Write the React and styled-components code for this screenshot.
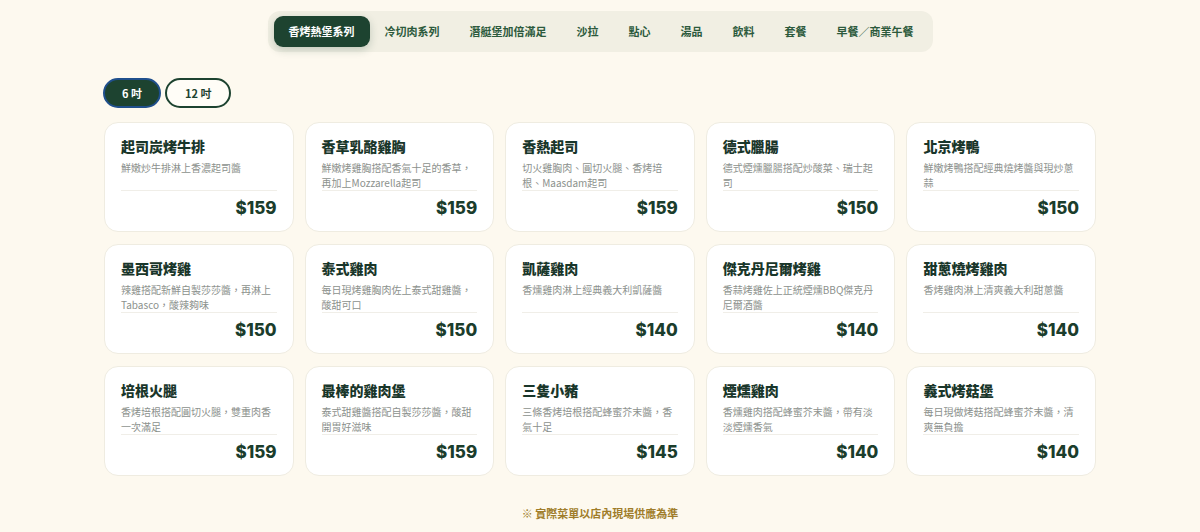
import React, { useState } from 'react'
import styled, { createGlobalStyle } from 'styled-components'

const GlobalStyle = createGlobalStyle`
  body {
    margin: 0;
    background: #fdf9ef;
    font-family: "Noto Sans CJK TC", "Noto Sans", sans-serif;
  }
`

const categories = ['香烤熱堡系列', '冷切肉系列', '潛艇堡加倍滿足', '沙拉', '點心', '湯品', '飲料', '套餐', '早餐／商業午餐']

const items = [
  { name: '起司炭烤牛排', desc: '鮮嫩炒牛排淋上香濃起司醬', price: 159 },
  { name: '香草乳酪雞胸', desc: '鮮嫩烤雞胸搭配香氣十足的香草，再加上Mozzarella起司', price: 159 },
  { name: '香熱起司', desc: '切火雞胸肉、圓切火腿、香烤培根、Maasdam起司', price: 159 },
  { name: '德式臘腸', desc: '德式煙燻臘腸搭配炒酸菜、瑞士起司', price: 150 },
  { name: '北京烤鴨', desc: '鮮嫩烤鴨搭配經典燒烤醬與現炒蔥蒜', price: 150 },
  { name: '墨西哥烤雞', desc: '辣雞搭配新鮮自製莎莎醬，再淋上Tabasco，酸辣夠味', price: 150 },
  { name: '泰式雞肉', desc: '每日現烤雞胸肉佐上泰式甜雞醬，酸甜可口', price: 150 },
  { name: '凱薩雞肉', desc: '香燻雞肉淋上經典義大利凱薩醬', price: 140 },
  { name: '傑克丹尼爾烤雞', desc: '香蒜烤雞佐上正統煙燻BBQ傑克丹尼爾酒醬', price: 140 },
  { name: '甜蔥燒烤雞肉', desc: '香烤雞肉淋上清爽義大利甜蔥醬', price: 140 },
  { name: '培根火腿', desc: '香烤培根搭配圓切火腿，雙重肉香一次滿足', price: 159 },
  { name: '最棒的雞肉堡', desc: '泰式甜雞醬搭配自製莎莎醬，酸甜開胃好滋味', price: 159 },
  { name: '三隻小豬', desc: '三條香烤培根搭配蜂蜜芥末醬，香氣十足', price: 145 },
  { name: '煙燻雞肉', desc: '香燻雞肉搭配蜂蜜芥末醬，帶有淡淡煙燻香氣', price: 140 },
  { name: '義式烤菇堡', desc: '每日現做烤菇搭配蜂蜜芥末醬，清爽無負擔', price: 140 },
]

function App() {
  const [tab, setTab] = useState(0)
  const [size, setSize] = useState('6')

  return (
    <Page>
      <GlobalStyle />
      <TabBar>
        {categories.map((c, i) => (
          <Tab key={c} active={i === tab} onClick={() => setTab(i)}>{c}</Tab>
        ))}
      </TabBar>
      <Content>
        <SizeRow>
          <SizeButton active={size === '6'} onClick={() => setSize('6')}>6 吋</SizeButton>
          <SizeButton active={size === '12'} onClick={() => setSize('12')}>12 吋</SizeButton>
        </SizeRow>
        <Grid>
          {items.map(item => (
            <Card key={item.name}>
              <Title>{item.name}</Title>
              <Desc>{item.desc}</Desc>
              <Price>${item.price}</Price>
            </Card>
          ))}
        </Grid>
        <Note>※ 實際菜單以店內現場供應為準</Note>
      </Content>
    </Page>
  )
}

export default App

const Page = styled.div`
  display: flex;
  flex-direction: column;
  align-items: center;
  padding-top: 11px;
  min-height: 532px;
  box-sizing: border-box;
`

const TabBar = styled.div`
  display: flex;
  align-items: center;
  padding: 5px 4px 5px 6px;
  background: #f1efe3;
  border-radius: 12px;
`

const Tab = styled.button`
  border: none;
  font-family: inherit;
  font-size: 11px;
  font-weight: 700;
  line-height: 15px;
  padding: 8px 15px;
  border-radius: 9px;
  cursor: pointer;
  white-space: nowrap;
  color: ${p => (p.active ? '#ffffff' : '#2c5a3c')};
  background: ${p => (p.active ? '#1d4330' : 'transparent')};
  box-shadow: ${p => (p.active ? '0 3px 8px rgba(29, 67, 48, 0.22)' : 'none')};
`

const Content = styled.div`
  width: 992px;
  display: flex;
  flex-direction: column;
`

const SizeRow = styled.div`
  display: flex;
  gap: 4px;
  margin-top: 26px;
  margin-left: -1px;
`

const SizeButton = styled.button`
  height: 30px;
  padding: 0 ${p => (p.active ? '17px' : '18px')};
  border-radius: 15px;
  font-family: inherit;
  font-size: 11px;
  font-weight: 700;
  cursor: pointer;
  border: 2px solid ${p => (p.active ? '#1f4f8c' : '#1d4330')};
  background: ${p => (p.active ? '#1d4330' : '#fffdf7')};
  color: ${p => (p.active ? '#ffffff' : '#1d4330')};
`

const Grid = styled.div`
  display: grid;
  grid-template-columns: repeat(5, 1fr);
  gap: 12px 11px;
  margin-top: 14px;
`

const Card = styled.div`
  height: 110px;
  box-sizing: border-box;
  background: #ffffff;
  border: 1.5px solid #efece1;
  border-radius: 14px;
  padding: 13px 16px 12px;
  display: flex;
  flex-direction: column;
`

const Title = styled.div`
  font-size: 14px;
  font-weight: 800;
  line-height: 20px;
  color: #19362a;
`

const Desc = styled.div`
  font-size: 10px;
  line-height: 15px;
  color: #8c918d;
  min-height: 30px;
  margin-top: 4px;
  border-bottom: 1px solid #f0eee8;
`

const Price = styled.div`
  margin-top: auto;
  text-align: right;
  font-family: Inter, "Liberation Sans", sans-serif;
  font-size: 17px;
  font-weight: 800;
  line-height: 22px;
  color: #1b3d2c;
`

const Note = styled.div`
  margin-top: 29px;
  text-align: center;
  font-size: 11px;
  font-weight: 700;
  color: #a07d2a;
`
